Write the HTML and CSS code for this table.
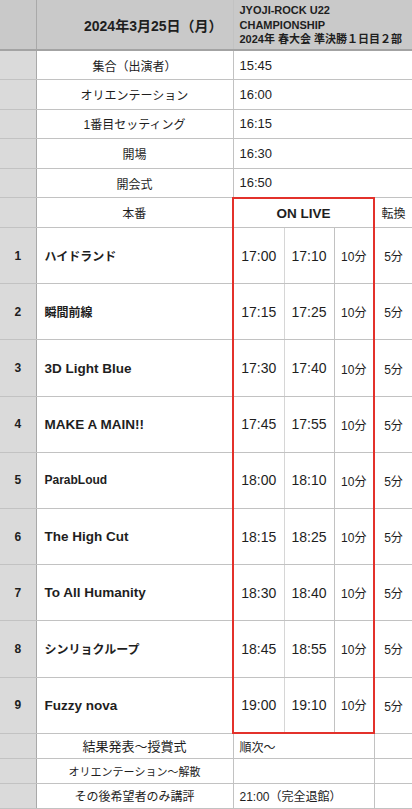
FILE: index.html
```html
<!DOCTYPE html>
<html lang="ja">
<head>
  <meta charset="UTF-8" />
  <title>JYOJI-ROCK U22 タイムテーブル</title>
  <meta name="viewport" content="width=device-width, initial-scale=1" />
  <link rel="stylesheet" href="styles.css">
</head>
<body>

  <table class="sheet">
    <colgroup>
      <col class="c-idx">
      <col class="c-name">
      <col class="c-start">
      <col class="c-end">
      <col class="c-dur">
      <col class="c-conv">
    </colgroup>
    <tbody>
      <tr class="head">
        <td class="idx"></td>
        <td class="date">2024年3月25日（月）</td>
        <td class="title" colspan="4">JYOJI-ROCK U22<br>CHAMPIONSHIP<br>2024年 春大会 準決勝１日目２部</td>
      </tr>

      <tr class="pre">
        <td class="idx"></td>
        <td class="label">集合（出演者）</td>
        <td class="val last" colspan="4">15:45</td>
      </tr>
      <tr class="pre">
        <td class="idx"></td>
        <td class="label">オリエンテーション</td>
        <td class="val last" colspan="4">16:00</td>
      </tr>
      <tr class="pre">
        <td class="idx"></td>
        <td class="label">1番目セッティング</td>
        <td class="val last" colspan="4">16:15</td>
      </tr>
      <tr class="pre">
        <td class="idx"></td>
        <td class="label">開場</td>
        <td class="val last" colspan="4">16:30</td>
      </tr>
      <tr class="pre">
        <td class="idx"></td>
        <td class="label">開会式</td>
        <td class="val last" colspan="4">16:50</td>
      </tr>

      <tr class="pre">
        <td class="idx"></td>
        <td class="label">本番</td>
        <td class="onlive" colspan="3">ON LIVE</td>
        <td class="conv last">転換</td>
      </tr>

      <tr class="act">
        <td class="idx num">1</td>
        <td class="band jp">ハイドランド</td>
        <td class="t1">17:00</td>
        <td class="t2">17:10</td>
        <td class="dur">10分</td>
        <td class="conv last">5分</td>
      </tr>
      <tr class="act">
        <td class="idx num">2</td>
        <td class="band jp">瞬間前線</td>
        <td class="t1">17:15</td>
        <td class="t2">17:25</td>
        <td class="dur">10分</td>
        <td class="conv last">5分</td>
      </tr>
      <tr class="act">
        <td class="idx num">3</td>
        <td class="band">3D Light Blue</td>
        <td class="t1">17:30</td>
        <td class="t2">17:40</td>
        <td class="dur">10分</td>
        <td class="conv last">5分</td>
      </tr>
      <tr class="act">
        <td class="idx num">4</td>
        <td class="band">MAKE A MAIN!!</td>
        <td class="t1">17:45</td>
        <td class="t2">17:55</td>
        <td class="dur">10分</td>
        <td class="conv last">5分</td>
      </tr>
      <tr class="act">
        <td class="idx num">5</td>
        <td class="band small">ParabLoud</td>
        <td class="t1">18:00</td>
        <td class="t2">18:10</td>
        <td class="dur">10分</td>
        <td class="conv last">5分</td>
      </tr>
      <tr class="act">
        <td class="idx num">6</td>
        <td class="band">The High Cut</td>
        <td class="t1">18:15</td>
        <td class="t2">18:25</td>
        <td class="dur">10分</td>
        <td class="conv last">5分</td>
      </tr>
      <tr class="act">
        <td class="idx num">7</td>
        <td class="band">To All Humanity</td>
        <td class="t1">18:30</td>
        <td class="t2">18:40</td>
        <td class="dur">10分</td>
        <td class="conv last">5分</td>
      </tr>
      <tr class="act">
        <td class="idx num">8</td>
        <td class="band jp">シンリョクループ</td>
        <td class="t1">18:45</td>
        <td class="t2">18:55</td>
        <td class="dur">10分</td>
        <td class="conv last">5分</td>
      </tr>
      <tr class="act final">
        <td class="idx num">9</td>
        <td class="band">Fuzzy nova</td>
        <td class="t1">19:00</td>
        <td class="t2">19:10</td>
        <td class="dur">10分</td>
        <td class="conv last">5分</td>
      </tr>

      <tr class="post">
        <td class="idx"></td>
        <td class="label big">結果発表～授賞式</td>
        <td class="val" colspan="3">順次～</td>
        <td class="last"></td>
      </tr>
      <tr class="post">
        <td class="idx"></td>
        <td class="label tiny">オリエンテーション～解散</td>
        <td class="val" colspan="3"></td>
        <td class="last"></td>
      </tr>
      <tr class="post">
        <td class="idx"></td>
        <td class="label">その後希望者のみ講評</td>
        <td class="val" colspan="3">21:00（完全退館）</td>
        <td class="last"></td>
      </tr>
    </tbody>
  </table>

</body>
</html>
```

FILE: styles.css
```css
* {
  box-sizing: border-box;
}
body {
  margin: 0;
  background: #fff;
  font-family: 'Liberation Sans', 'Noto Sans CJK JP', sans-serif;
  color: #1e1e1e;
  overflow: hidden;
}
.sheet {
  width: 412px;
  table-layout: fixed;
  border-collapse: collapse;
}
.c-idx { width: 36px; }
.c-name { width: 197px; }
.c-start { width: 51px; }
.c-end { width: 50px; }
.c-dur { width: 40px; }
.c-conv { width: 38px; }

td {
  border: 1px solid #c2c2c2;
  padding: 0;
  font-size: 12px;
  white-space: nowrap;
  overflow: hidden;
}
td.last {
  border-right: 0;
}
.head td {
  border-top: 0;
}

/* row heights */
.head { height: 50px; }
.pre { height: 29.6px; }
.act { height: 56.2px; }
.post { height: 25px; }

.head td {
  background: #c9c9c9;
  border-bottom: 2px solid #a3a3a3;
}
.idx {
  background: #dadada;
  border-left: 0;
  border-right: 1px solid #a9a9a9;
  text-align: center;
}
.num {
  font-weight: bold;
  font-size: 12px;
}
.date {
  font-size: 14px;
  font-weight: bold;
  text-align: right;
  padding-right: 10px;
}
.title {
  font-size: 11px;
  font-weight: bold;
  line-height: 14.5px;
  padding-left: 6px;
  padding-top: 1px;
}

.label {
  text-align: center;
}
.label.big {
  font-size: 13px;
}
.label.tiny {
  font-size: 11px;
}
.val {
  padding-left: 6px;
}
.pre .val {
  font-size: 13px;
}

.onlive {
  text-align: center;
  font-weight: bold;
  font-size: 13.5px;
  border: 2px solid #e3312b;
  border-bottom: 1px solid #c2c2c2;
}
.conv {
  text-align: center;
}

.band {
  font-weight: bold;
  font-size: 13.5px;
  padding-left: 8px;
}
.band.small,
.band.jp {
  font-size: 12px;
}
.t1, .t2 {
  text-align: center;
  font-size: 14px;
}
.t1 {
  border-left: 2px solid #e3312b;
  border-right: 1px solid #d6d6d6;
}
.dur {
  text-align: center;
  border-right: 2px solid #e3312b;
}
.final .t1, .final .t2, .final .dur {
  border-bottom: 2px solid #e3312b;
}
```
